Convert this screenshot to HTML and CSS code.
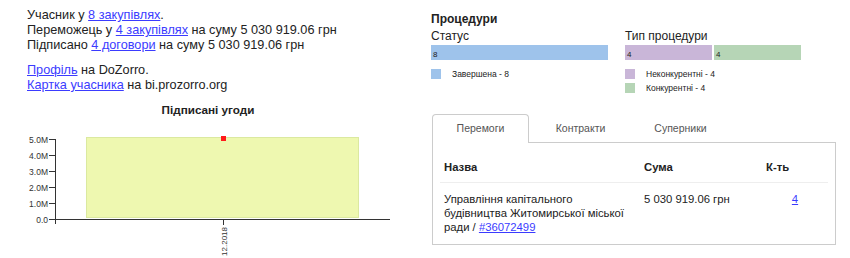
FILE: index.html
```html
<!DOCTYPE html>
<html>
<head>
<meta charset="utf-8">
<link rel="stylesheet" href="styles.css">
</head>
<body>
<div class="page">
  <div class="left">
    <div class="info">
      <p>Учасник у <a href="#">8 закупівлях</a>.<br>
      Переможець у <a href="#">4 закупівлях</a> на суму 5 030 919.06 грн<br>
      Підписано <a href="#">4 договори</a> на суму 5 030 919.06 грн</p>
      <p><a href="#">Профіль</a> на DoZorro.<br>
      <a href="#">Картка учасника</a> на bi.prozorro.org</p>
    </div>
    <div class="chart-title">Підписані угоди</div>
    <svg class="chart" width="416" height="134" viewBox="0 0 416 134">
      <rect x="86.5" y="12.5" width="272" height="80" fill="#eef8b0" stroke="#dbe9a0" stroke-width="1"/>
      <rect x="221" y="11" width="5" height="5" fill="#ff1a1a"/>
      <g font-family="Liberation Sans, Arial, sans-serif" font-size="8.5" fill="#333" text-anchor="end">
        <text x="48" y="17.5">5.0M</text>
        <text x="48" y="33.5">4.0M</text>
        <text x="48" y="49.5">3.0M</text>
        <text x="48" y="65.5">2.0M</text>
        <text x="48" y="81.5">1.0M</text>
        <text x="48" y="97.5">0.0</text>
      </g>
      <g stroke="#333" stroke-width="1">
        <line x1="55.5" y1="14" x2="55.5" y2="99"/>
        <line x1="49" y1="14.5" x2="55.5" y2="14.5"/>
        <line x1="49" y1="30.5" x2="55.5" y2="30.5"/>
        <line x1="49" y1="46.5" x2="55.5" y2="46.5"/>
        <line x1="49" y1="62.5" x2="55.5" y2="62.5"/>
        <line x1="49" y1="78.5" x2="55.5" y2="78.5"/>
        <line x1="49" y1="94.5" x2="55.5" y2="94.5"/>
        <line x1="55" y1="94.5" x2="390" y2="94.5"/>
        <line x1="223.5" y1="94.5" x2="223.5" y2="100"/>
      </g>
      <text x="0" y="0" transform="translate(226.5,102) rotate(-90)" text-anchor="end" font-family="Liberation Sans, Arial, sans-serif" font-size="8" fill="#333">12.2018</text>
    </svg>
  </div>
  <div class="right">
    <div class="proc-title">Процедури</div>
    <div class="proc">
      <div class="proc-col status">
        <div class="proc-sub">Статус</div>
        <div class="bars">
          <div class="bar blue" style="width:177px">8</div>
        </div>
        <ul class="legend">
          <li><span class="sw blue"></span>Завершена - 8</li>
        </ul>
      </div>
      <div class="proc-col type">
        <div class="proc-sub">Тип процедури</div>
        <div class="bars">
          <div class="bar purple" style="width:87px">4</div>
          <div class="bar green" style="width:87px">4</div>
        </div>
        <ul class="legend">
          <li><span class="sw purple"></span>Неконкурентні - 4</li>
          <li><span class="sw green"></span>Конкурентні - 4</li>
        </ul>
      </div>
    </div>
    <div class="tabs">
      <div class="tab active">Перемоги</div>
      <div class="tab">Контракти</div>
      <div class="tab">Суперники</div>
    </div>
    <div class="panel">
      <table class="wins">
        <thead>
          <tr><th class="c-name">Назва</th><th class="c-sum">Сума</th><th class="c-cnt">К-ть</th></tr>
        </thead>
        <tbody>
          <tr>
            <td class="c-name">Управління капітального будівництва Житомирської міської ради / <a href="#">#36072499</a></td>
            <td class="c-sum">5 030 919.06 грн</td>
            <td class="c-cnt num"><a href="#">4</a></td>
          </tr>
        </tbody>
      </table>
    </div>
  </div>
</div>
</body>
</html>
```

FILE: styles.css
```css
html, body {
  margin: 0;
  padding: 0;
  background: #fff;
}
body {
  font-family: "Liberation Sans", Arial, sans-serif;
  color: #222;
}
a {
  color: #3b3bff;
  text-decoration: underline;
}
.page {
  display: flex;
  width: 850px;
  height: 258px;
  overflow: hidden;
}
.left {
  width: 416px;
  flex: none;
}
.info {
  padding: 8px 0 0 27px;
  font-size: 12.7px;
  line-height: 15px;
}
.info p {
  margin: 0 0 10px 0;
}
.chart-title {
  text-align: center;
  font-weight: bold;
  font-size: 11.7px;
  line-height: 14px;
  color: #222;
  margin-top: 10px;
}
.chart {
  display: block;
  margin-top: 8px;
}
.right {
  margin-left: 15px;
  width: 404px;
  flex: none;
}
.proc-title {
  font-weight: bold;
  font-size: 12px;
  line-height: 14px;
  margin-top: 12px;
  color: #222;
}
.proc {
  display: flex;
  gap: 17px;
}
.proc-sub {
  font-size: 12px;
  line-height: 14px;
  margin-top: 3px;
  margin-bottom: 2px;
  color: #222;
}
.status { width: 177px; }
.type { width: 180px; }
.bars {
  display: flex;
  gap: 2px;
}
.bar {
  height: 15px;
  font-size: 8px;
  line-height: 19px;
  padding-left: 2px;
  box-sizing: border-box;
  color: #222;
}
.blue { background: #9ec3eb; }
.purple { background: #c9b6d8; }
.green { background: #b6d5b6; }
.legend {
  list-style: none;
  margin: 9px 0 0 0;
  padding: 0;
  font-size: 8.5px;
}
.legend li {
  display: flex;
  align-items: center;
  height: 10px;
  margin-bottom: 4px;
}
.sw {
  width: 10px;
  height: 10px;
  margin-right: 11px;
  flex: none;
}
.tabs {
  display: flex;
  margin-top: 17px;
  margin-left: 1px;
  gap: 3px;
  position: relative;
  z-index: 1;
}
.tab {
  width: 97px;
  height: 28px;
  box-sizing: border-box;
  font-size: 10.5px;
  line-height: 27px;
  text-align: center;
  color: #555;
  border: 1px solid transparent;
  border-bottom: none;
}
.tab.active {
  border-color: #ccc;
  border-radius: 4px 4px 0 0;
  background: #fff;
  height: 29px;
  margin-bottom: -1px;
}
.panel {
  margin-left: 1px;
  width: 404px;
  height: 103px;
  box-sizing: border-box;
  border: 1px solid #ccc;
  padding: 0 7px;
}
.wins {
  width: 100%;
  border-collapse: collapse;
  font-size: 11.3px;
  line-height: 14px;
  color: #222;
}
.wins th {
  text-align: left;
  font-weight: bold;
  padding: 17px 4px 8px 4px;
  border-bottom: 1px solid #eee;
}
.wins td {
  vertical-align: top;
  padding: 9px 4px 0 4px;
}
.c-name { width: 192px; }
.c-sum { width: 114px; }
.wins td.num { text-align: center; }
```
